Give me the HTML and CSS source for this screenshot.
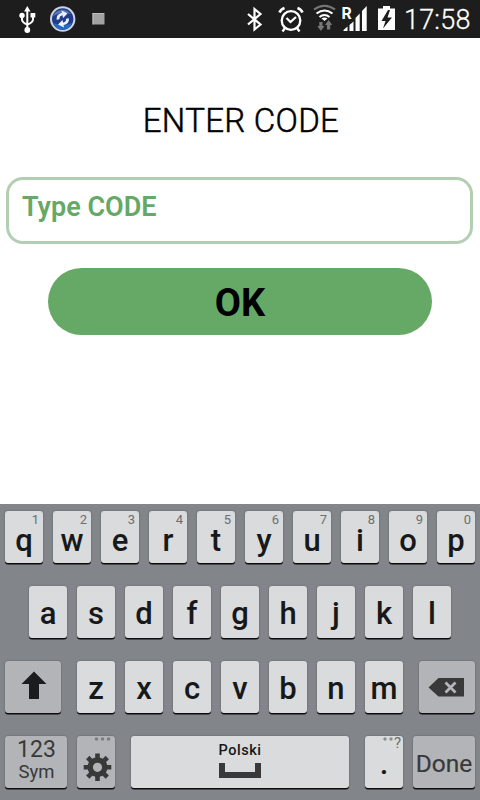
FILE: index.html
```html
<!DOCTYPE html>
<html lang="en">
<head>
  <meta charset="UTF-8" />
  <meta name="viewport" content="width=device-width, initial-scale=1.0"/>
  <title>Enter code</title>
  <link rel="stylesheet" href="styles.css">
</head>
<body>
  <!-- Status bar -->
  <header class="status-bar">
    <svg class="status-icons" width="110" height="38" viewBox="0 0 110 38">
      <!-- USB -->
      <g fill="none" stroke="#fff" stroke-width="2">
        <path d="M27.300 10V29M22 16v3.500q0 3 5.300 5M33 16v3.500q0 3-5.700 5"/>
      </g>
      <path d="M27.300 6l3.200 5.500h-6.400zM30.500 13h4.800v4.600h-4.800z" fill="#fff"/>
      <circle cx="22" cy="15.500" r="2.700" fill="#fff"/>
      <circle cx="27.300" cy="30" r="2.900" fill="#fff"/>
      <!-- Sync -->
      <circle cx="62.700" cy="19" r="11.700" fill="#203d8b" stroke="#ced3df" stroke-width="2"/>
      <path d="M53 16a10.500 10.500 0 0 1 18-2q-9-3-18 2z" fill="#5a75b5"/>
      <path d="M53 23q10 4 19 0a10 10 0 0 1-19 0z" fill="#2569bd"/>
      <g fill="none" stroke="#eef3fa" stroke-width="2.800">
        <path d="M58 19.500q-.5-4.500 4.500-5.500"/>
        <path d="M67.500 18.500q.5 4.500-4.500 5.500"/>
      </g>
      <path d="M61.500 10.500l6 3-4.500 4.500zM64 27.500l-6-3 4.500-4.500z" fill="#eef3fa"/>
      <!-- Running app -->
      <path d="M92.500 13H104.500V24.500H92.500z" fill="#a2a2a2"/>
      <path d="M92.500 13.500H104M93 13V24.500" fill="none" stroke="#bdbdbd"/>
    </svg>
    <div class="status-right">
      <svg class="status-icons" width="160" height="38" viewBox="240 0 160 38">
        <!-- Bluetooth -->
        <path d="M248 14l12.500 10.500-6 5V9l6 5L248 24.500" fill="none" stroke="#fff" stroke-width="2.200"/>
        <!-- Alarm -->
        <g fill="none" stroke="#fff" stroke-width="2.300">
          <circle cx="291" cy="20.500" r="9.300"/>
          <path d="M286.500 18l4 4 5.500-5M285 28l-2.500 3.500M297 28l2.500 3.500"/>
          <path d="M279.500 12.500q1-3 5-4.500M302.500 12.500q-1-3-5-4.500" stroke-width="2.600"/>
        </g>
        <!-- Wi-Fi with traffic arrows -->
        <g fill="none" stroke="#fff" stroke-width="2.100">
          <path d="M314 9.500q10.500-7.500 21 0" stroke="#777"/>
          <path d="M316.500 13.500q8-6 16 0M319.500 17q5-4 10 0"/>
        </g>
        <path d="M321.500 18.400q3-2 6 0l-3 2.600z" fill="#fff"/>
        <path d="M319.300 22h3.200v4h2l-3.600 5-3.600-5h2zM327 29.500h3.200V25h2l-3.600-5-3.600 5h2z" fill="#777"/>
        <!-- Mobile signal -->
        <path d="M343.500 31v-1l4-3.500V31zM349.500 31v-6l4-3.500V31zM355.500 31V18l4.200-4.500V31zM362 31V11l4.700-5V31z" fill="#fff"/>
        <text class="roaming" x="341.500" y="18.500">R</text>
        <!-- Battery -->
        <path d="M378 8.500h5V6h7v2.500h5V30h-17z" fill="#fff"/>
        <path d="M388 10l-6.500 11h4l-2.500 7.500 9-11h-4.500l2.500-7.500z" fill="#1d1d1d"/>
      </svg>
      <span class="clock">17:58</span>
    </div>
  </header>

  <!-- Code form -->
  <main class="form">
    <h1>ENTER CODE</h1>
    <input class="code-input" type="text" placeholder="Type CODE" />
    <button class="ok-btn">OK</button>
  </main>

  <!-- Keyboard -->
  <section class="keyboard">
    <div class="key-row numbered">
      <div class="key">q<small>1</small></div>
      <div class="key">w<small>2</small></div>
      <div class="key">e<small>3</small></div>
      <div class="key">r<small>4</small></div>
      <div class="key">t<small>5</small></div>
      <div class="key">y<small>6</small></div>
      <div class="key">u<small>7</small></div>
      <div class="key">i<small>8</small></div>
      <div class="key">o<small>9</small></div>
      <div class="key">p<small>0</small></div>
    </div>
    <div class="key-row">
      <div class="key">a</div>
      <div class="key">s</div>
      <div class="key">d</div>
      <div class="key">f</div>
      <div class="key">g</div>
      <div class="key">h</div>
      <div class="key">j</div>
      <div class="key">k</div>
      <div class="key">l</div>
    </div>
    <div class="key-row spread">
      <div class="key dark shift">
        <svg width="56" height="52" viewBox="0 0 56 52">
          <path d="M29 10.500L41.500 23H34v15H24V23h-7.500z" fill="#1b1c1d"/>
        </svg>
      </div>
      <div class="letters">
        <div class="key">z</div>
        <div class="key">x</div>
        <div class="key">c</div>
        <div class="key">v</div>
        <div class="key">b</div>
        <div class="key">n</div>
        <div class="key">m</div>
      </div>
      <div class="key dark shift">
        <svg width="56" height="52" viewBox="0 0 56 52">
          <path d="M9.500 26.500L19.500 17H45v18.500H19.500z" fill="#39393a"/>
          <path d="M26.500 21.500l10 10M36.500 21.500l-10 10" stroke="#b4b6ba" stroke-width="2.800"/>
        </svg>
      </div>
    </div>
    <div class="key-row spread">
      <div class="key dark wide sym"><span>123</span><span>Sym</span></div>
      <div class="key dark settings">
        <svg width="38" height="52" viewBox="0 0 38 52">
          <g fill="#7c7d80">
            <circle cx="19.500" cy="3" r="1.800"/>
            <circle cx="25.500" cy="3" r="1.800"/>
            <circle cx="31.500" cy="3" r="1.800"/>
          </g>
          <g stroke="#39393a">
            <circle cx="20.500" cy="31.300" r="7.300" fill="none" stroke-width="5.400"/>
            <path d="M20.500 17.500v6M20.500 39v6M6.700 31.300h6M28.300 31.300h6M10.700 21.500l4.500 4.500M25.800 36.600l4.500 4.500M30.300 21.500l-4.500 4.500M15.200 36.600l-4.500 4.500" stroke-width="4.600"/>
          </g>
        </svg>
      </div>
      <div class="key space">
        <span>Polski</span>
        <svg width="42" height="15" viewBox="0 0 42 15">
          <path d="M3 0v12h36V0" fill="none" stroke="#39393a" stroke-width="6"/>
        </svg>
      </div>
      <div class="key dot">.<small><svg width="11" height="4" viewBox="0 0 11 4"><circle cx="2" cy="2" r="1.700"/><circle cx="8" cy="2" r="1.700"/></svg>?</small></div>
      <div class="key dark wide done">Done</div>
    </div>
  </section>
</body>
</html>
```
FILE: styles.css
```css
* {
  box-sizing: border-box;
}

body {
  margin: 0;
  height: 800px;
  display: flex;
  flex-direction: column;
  background: #fff;
  font-family: Roboto, sans-serif;
  overflow: hidden;
}

.status-bar {
  height: 38px;
  flex-shrink: 0;
  display: flex;
  justify-content: space-between;
  background: #1d1d1d;
}

.status-icons {
  display: block;
}

.status-right {
  display: flex;
  width: 240px;
}

.roaming {
  font-size: 16px;
  font-weight: bold;
  fill: #fff;
}

.clock {
  margin-left: 4px;
  color: #fff;
  font-size: 27px;
  font-weight: 300;
  letter-spacing: 0.2px;
  line-height: 40px;
  -webkit-text-stroke: 0.3px #fff;
}

.form {
  flex: 1;
  display: flex;
  flex-direction: column;
  align-items: center;
}

h1 {
  margin: 63px 0 0 2px;
  font-size: 33px;
  font-weight: 300;
  letter-spacing: 0.3px;
  line-height: 40px;
  color: #000;
  white-space: nowrap;
  -webkit-text-stroke: 0.5px #000;
}

.code-input {
  width: 467px;
  height: 67px;
  margin: 36px 0 0 -1px;
  padding: 0 13px 8px;
  border: 3px solid #b2cfb3;
  border-radius: 17px;
  background: #fff;
  font-family: inherit;
  font-size: 27px;
  font-weight: 600;
  color: #66a866;
}

.code-input::placeholder {
  color: #66a866;
  opacity: 1;
}

.ok-btn {
  width: 384px;
  height: 67px;
  margin-top: 24px;
  padding: 3px 0 0;
  border: none;
  border-radius: 34px;
  background: #66a866;
  font-family: inherit;
  font-size: 38px;
  font-weight: 700;
  color: #000;
}

.keyboard {
  height: 296px;
  flex-shrink: 0;
  display: flex;
  flex-direction: column;
  gap: 23px;
  padding: 7px 5px 0;
  background: #828589;
}

.key-row {
  display: flex;
  justify-content: center;
  gap: 10px;
}

.spread {
  justify-content: space-between;
  gap: 0;
}

.letters {
  display: flex;
  gap: 10px;
}

.key {
  position: relative;
  width: 38px;
  height: 52px;
  padding-top: 2px;
  border-radius: 3px;
  background: #d9dbdc;
  box-shadow: 0 1.5px 0 #0c0d0e, 0 0 2px rgba(0, 0, 0, 0.3);
  color: #17181a;
  font-size: 31px;
  font-weight: 500;
  line-height: 52px;
  text-align: center;
}

.numbered .key {
  padding-top: 4px;
}

.key small {
  position: absolute;
  top: 1px;
  right: 4px;
  color: #6c6e70;
  font-size: 13px;
  font-weight: 400;
  line-height: 15px;
}

.dark {
  background: #b2b4b8;
  color: #39393a;
}

.shift,
.settings {
  padding: 0;
}

.shift {
  width: 56px;
}

.key svg {
  display: block;
}

.wide {
  width: 62px;
}

.sym {
  display: flex;
  flex-direction: column;
  padding: 2px 0 0 1px;
  font-size: 23px;
  font-weight: 400;
  line-height: 24px;
}

.sym span + span {
  font-size: 18.5px;
  line-height: 20px;
}

.space {
  width: 218px;
  margin-left: 6px;
  margin-right: 6px;
  display: flex;
  flex-direction: column;
  align-items: center;
  padding-top: 5px;
  font-size: 14.5px;
  letter-spacing: 0.5px;
  line-height: 20px;
}

.space svg {
  margin-top: 2px;
}

.key.dot small {
  display: flex;
  top: 0;
  right: 2px;
  font-size: 15px;
}

.dot small svg {
  margin-top: 1px;
  fill: #8b8d8f;
}

.done {
  font-size: 24.5px;
  font-weight: 400;
  -webkit-text-stroke: 0.2px #39393a;
}
```
